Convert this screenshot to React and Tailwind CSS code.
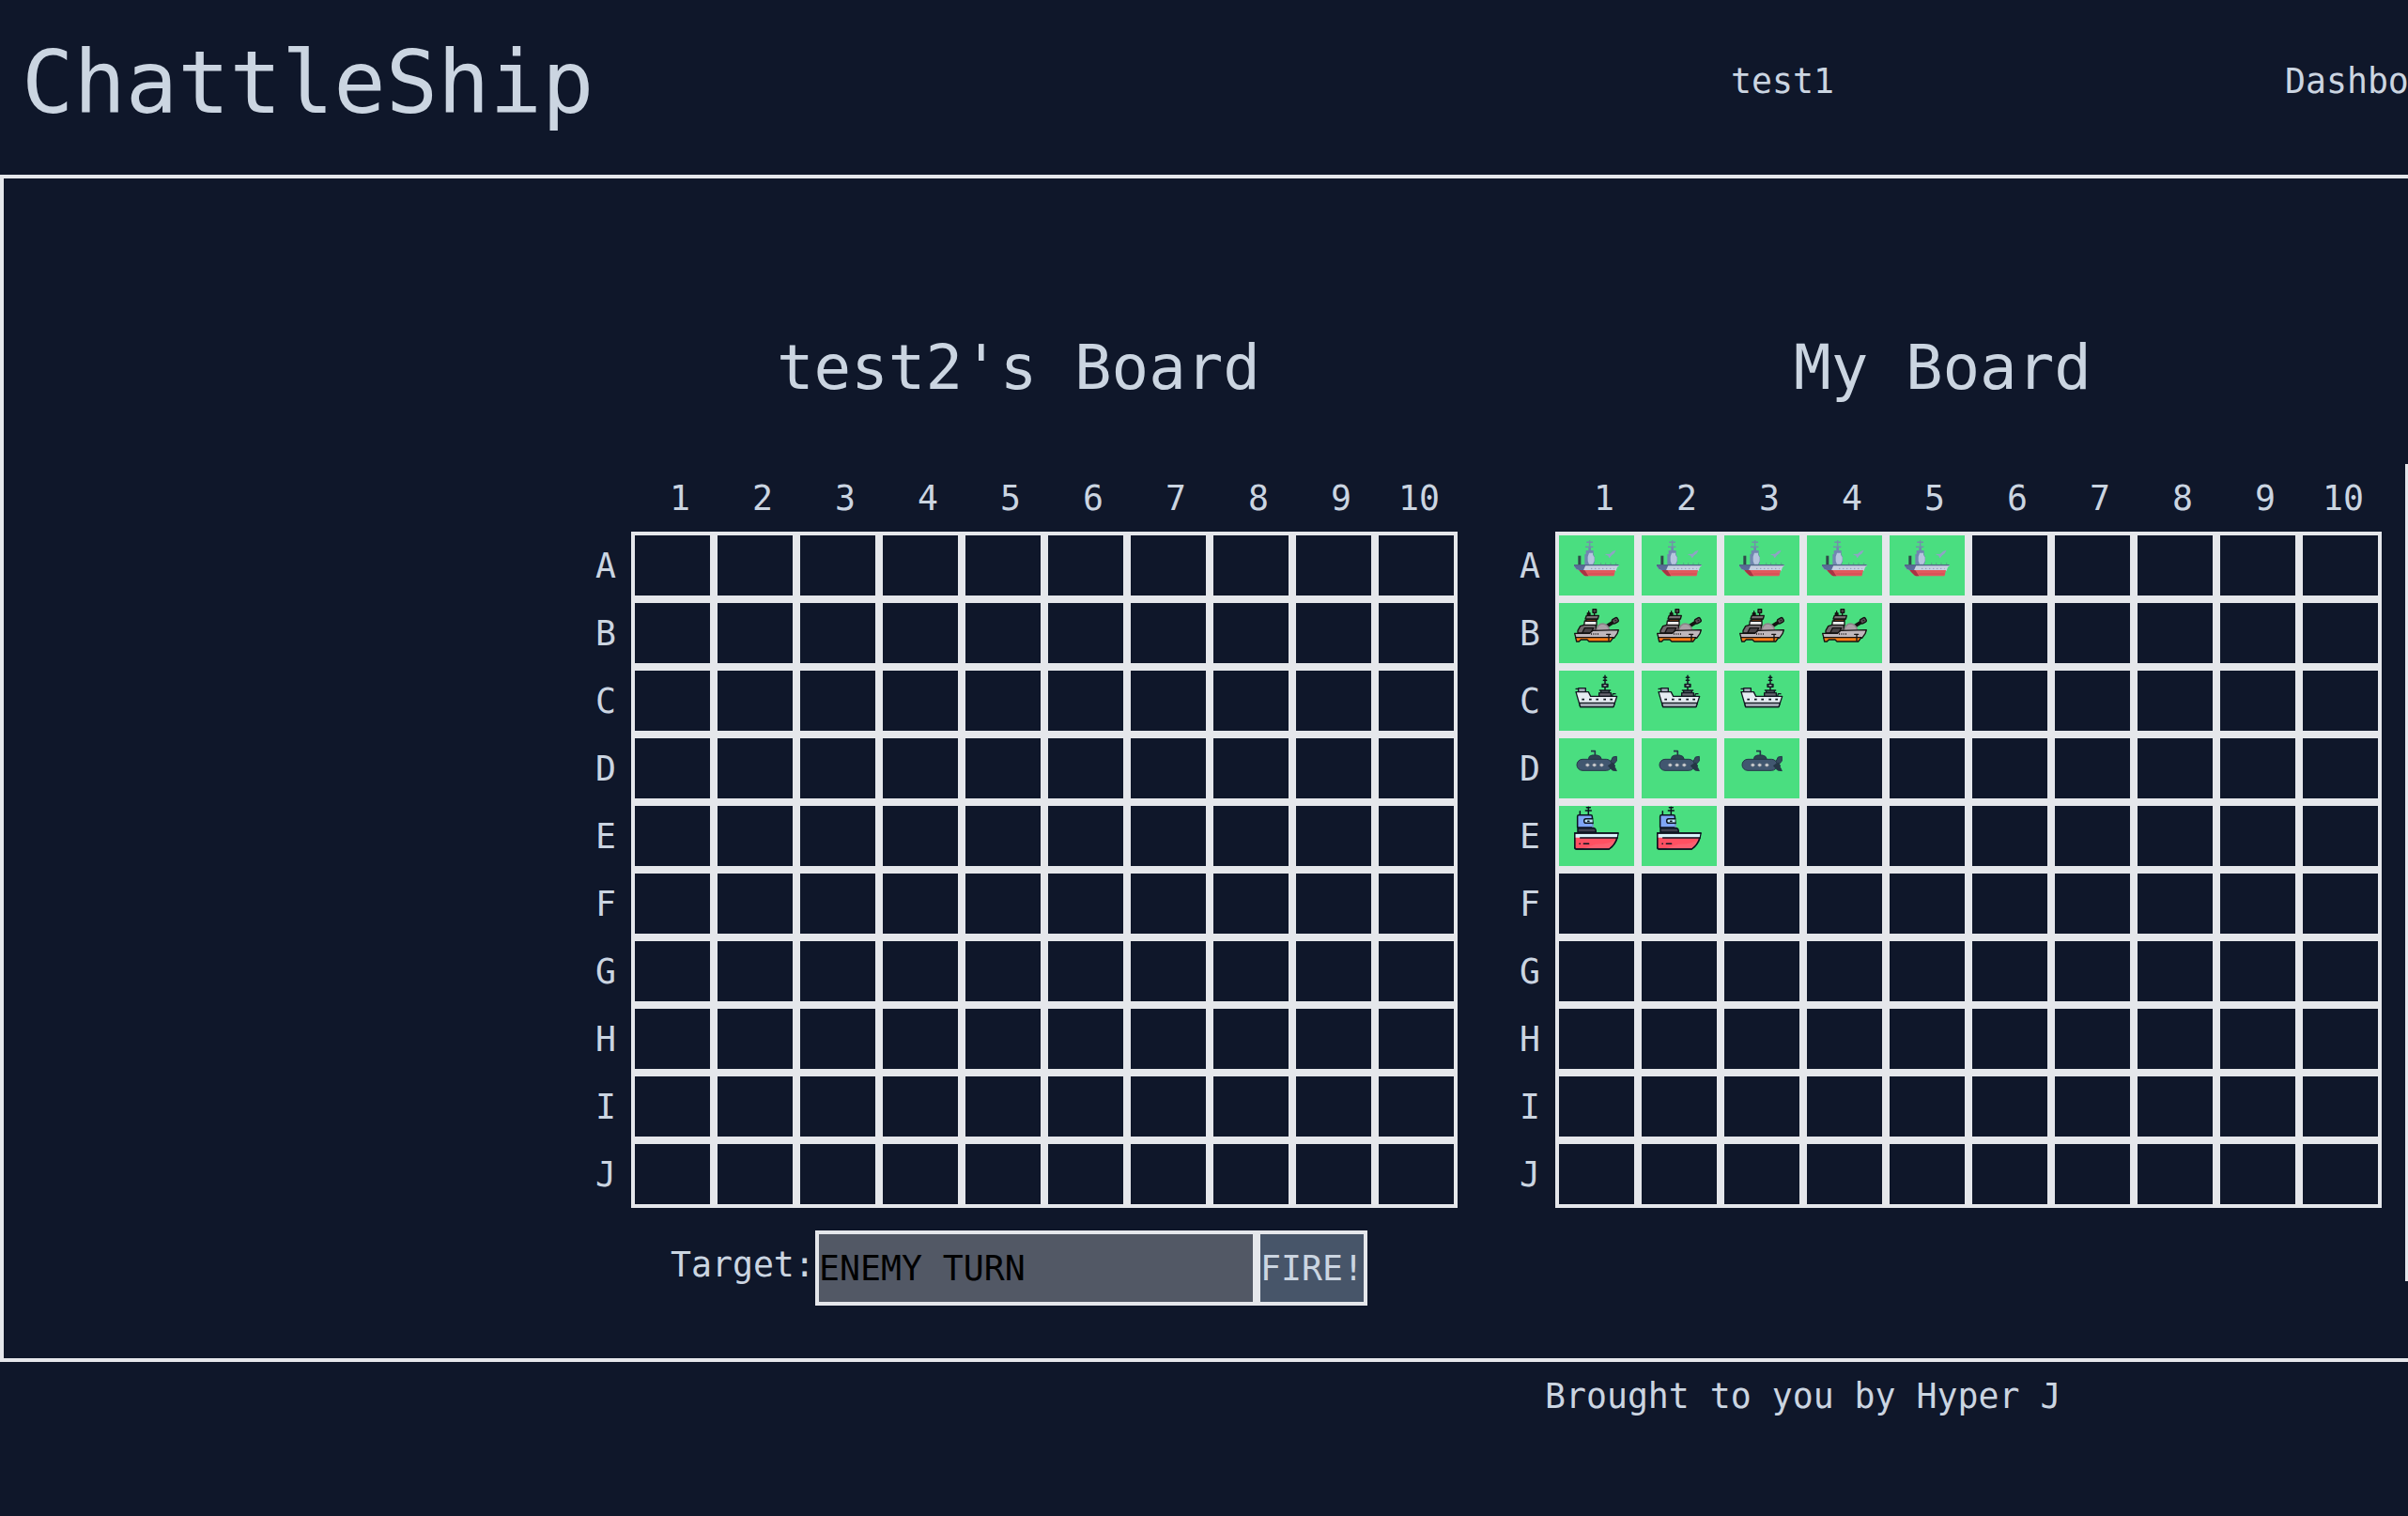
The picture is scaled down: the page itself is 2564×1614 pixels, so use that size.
import React from "react";

function Carrier() {
  return (
    <>
      <path d="M50 16V54M40 22H60M36 37H61" stroke="#6f93a8" strokeWidth="4.5" />
      <path d="M34 94V60H38V48H46V38H54V48H62V62L66 68V84L62 94Z" fill="#7187b0" />
      <path d="M48 56H60V62L65 70V82L60 92H48L44 82V68Z" fill="#b6c5de" />
      <rect x="13" y="65" width="9" height="29" fill="#2f4a4a" />
      <path d="M98 60L114 59L124 50L134 47L128 58L120 64L113 73L109 65Z" fill="#8fa3c4" />
      <path d="M86 92V88M101 92V88M117 92V88M134 92V88" stroke="#5d8f8c" strokeWidth="3" />
      <path d="M0 93H143V98L138 101L134 113H20L8 109L0 98Z" fill="#c6cfe0" />
      <path d="M0 93H38L30 112H18L8 109L0 98Z" fill="#5a6c98" />
      <path d="M0 95H143" stroke="#4f6684" strokeWidth="4" />
      <path d="M54 106H128" stroke="#7f8cab" strokeWidth="2.5" strokeDasharray="4 8" />
      <path d="M16 111H132L128 128Q127 130 124 130H36Q28 126 16 111Z" fill="#e2595d" />
      <path d="M16 111H34L46 130H36Q28 126 16 111Z" fill="#a83444" />
      <path d="M46 123H128" stroke="#c9474f" strokeWidth="2" />
    </>
  );
}

function Battleship() {
  return (
    <g stroke="#151313" strokeWidth="4" strokeLinejoin="round" strokeLinecap="round">
      <path d="M47 38V26M43 38V32H51V38" strokeWidth="4" />
      <path d="M65 40V30" />
      <rect x="60" y="20" width="11" height="11" fill="#514b4e" />
      <path d="M106 73L130 58" strokeWidth="12" />
      <rect x="122" y="49" width="19" height="15" rx="5" fill="#5b5659" transform="rotate(-30 131 56)" />
      <circle cx="132" cy="56" r="2" fill="#888888" strokeWidth="2" />
      <path d="M34 57H72V72H32Z" fill="#eeeeee" />
      <path d="M40 51H74L70 58H38Z" fill="#7a3d16" />
      <path d="M40 40H79L76 51H36Z" fill="#777073" />
      <path d="M32 70H70V96H12V88L20 74Z" fill="#716a6e" />
      <path d="M70 92Q74 66 92 66Q110 68 114 90Z" fill="#a9a1a6" stroke="#8b8488" />
      <path d="M34 80H62L54 96H26Z" fill="#494447" />
      <path d="M2 97H50L60 88L142 86L138 98L128 112H6Z" fill="#bfb7bc" />
      <path d="M5 110H126L116 123H48L42 117H22L16 123H8Z" fill="#f77d16" />
      <path d="M54 99H78" strokeDasharray="3 4" strokeLinecap="butt" strokeWidth="5" />
      <path d="M104 100H116M111 101V121" />
    </g>
  );
}

function Cruiser() {
  return (
    <g stroke="#101820" strokeWidth="4" strokeLinejoin="round" strokeLinecap="round">
      <path d="M99 16V62M94 22H104M94 31H104" strokeWidth="4.5" />
      <rect x="90" y="43" width="18" height="9" fill="#27333a" />
      <path d="M96 47.500H102" stroke="#dfe5e8" strokeWidth="3" />
      <path d="M82 63H116M86 63V70H112V63" fill="#59656d" />
      <path d="M80 71H118V82H80Z" fill="#65666f" />
      <path d="M122 82L124 74H132" fill="none" />
      <path d="M6 58H14M14 56H37V68H14Z" fill="#a3a9ba" />
      <path d="M6 68H46L53 82H137L126 116H20Z" fill="#e5ecf2" />
      <path d="M17 103H130L126 116H20Z" fill="#a0a6b2" />
      <path d="M25 92H33M48 92H56M70 92H78M94 92H102M115 92H123" strokeWidth="5" strokeLinecap="butt" />
    </g>
  );
}

function Submarine() {
  return (
    <g stroke="#243848" strokeWidth="3" strokeLinejoin="round">
      <path d="M54 41H67V54" fill="none" strokeWidth="5" />
      <path d="M46 68Q46 55 58 54H74Q87 56 88 68Z" fill="#2f4353" />
      <path d="M106 76L118 72L124 60L136 58V72L128 82L118 86Z" fill="#344a5d" />
      <rect x="9" y="67" width="112" height="36" rx="18" fill="#415770" />
      <path d="M109 88L124 78L130 86V92L136 104L122 102Z" fill="#253746" />
      <g fill="#d5d5d8" stroke="#6d7884" strokeWidth="2">
        <ellipse cx="43" cy="85.500" rx="6" ry="5" />
        <ellipse cx="65" cy="85.500" rx="6" ry="5" />
        <ellipse cx="88" cy="85.500" rx="6" ry="5" />
      </g>
    </g>
  );
}

function Destroyer() {
  return (
    <g stroke="#0b1320" strokeWidth="4.5" strokeLinejoin="round" strokeLinecap="round">
      <path d="M46 4V28M40 5H52M37 15H55M19 17V28" fill="none" />
      <path d="M15 29H54Q58 29 58 34L60 56V69H11V34Q11 29 15 29Z" fill="#7fa5f5" />
      <path d="M60 59V67" stroke="#8dc4ef" />
      <path d="M59 41H38Q32 41 32 48Q32 55 38 55H59" fill="#bfe6fb" />
      <path d="M44 49H48" />
      <path d="M12 71H64Q70 72 70 84H12Z" fill="#3d4050" />
      <path d="M2 87H141L138 102Q130 126 112 138H8Q2 138 2 132Z" fill="#ff5062" />
      <path d="M4 89H139L137 101H4Z" fill="#d9f3fb" stroke="none" />
      <path d="M136 104Q120 122 70 122L30 136H112Q130 124 136 104Z" fill="#fb5f70" stroke="none" />
      <path d="M2 87H141M20 102H137M18 121H19M31 121H47M2 87V132Q2 138 8 138H112Q130 126 138 102" fill="none" />
    </g>
  );
}

const fleet = {
  A: { Ship: Carrier, size: 5 },
  B: { Ship: Battleship, size: 4 },
  C: { Ship: Cruiser, size: 3 },
  D: { Ship: Submarine, size: 3 },
  E: { Ship: Destroyer, size: 2 },
};

const rows = ["A", "B", "C", "D", "E", "F", "G", "H", "I", "J"];
const cols = [1, 2, 3, 4, 5, 6, 7, 8, 9, 10];

function Cell({ Ship }) {
  return (
    <div
      className={
        Ship
          ? "flex h-[72px] w-[88px] items-start justify-center border-4 border-[#e5e7eb] bg-[#4ade80]"
          : "h-[72px] w-[88px] border-4 border-[#e5e7eb]"
      }
    >
      {Ship && (
        <svg viewBox="0 0 144 144" className="size-12" fill="none">
          <Ship />
        </svg>
      )}
    </div>
  );
}

function Board({ title, ships }) {
  return (
    <section className="flex w-[932px] flex-col">
      <h2 className="pt-1 pr-[3px] text-center text-[65.8px] leading-[88px]">{title}</h2>
      <div className="mt-[58px] flex h-[72px] pl-[52px]">
        {cols.map((n) => (
          <div
            key={n}
            className={n === 10 ? "w-[88px] pl-[25px] leading-[74px]" : "w-[88px] pl-[41px] leading-[74px]"}
          >
            {n}
          </div>
        ))}
      </div>
      {rows.map((r) => (
        <div key={r} className="flex h-[72px]">
          <div className="w-[52px] pl-[14px] leading-[74px]">{r}</div>
          {cols.map((n) => (
            <Cell key={n} Ship={ships && ships[r] && n <= ships[r].size ? ships[r].Ship : null} />
          ))}
        </div>
      ))}
    </section>
  );
}

export default function App() {
  return (
    <div className="flex h-[1614px] w-[2564px] flex-col overflow-hidden bg-[#0f172a] font-['DejaVu_Sans_Mono',monospace] text-[36.5px] whitespace-nowrap text-[#cbd5e1]">
      <header className="flex h-[186px] shrink-0 pl-[23px]">
        <h1 className="w-[1820px] shrink-0 pt-[33px] text-[92px] leading-[112px]">ChattleShip</h1>
        <nav className="flex pt-[59px] leading-[56px]">
          <span className="w-[590px] shrink-0">test1</span>
          <span>Dashboard</span>
        </nav>
      </header>
      <main className="flex h-[1264px] shrink-0 border-y-4 border-l-4 border-[#e5e7eb] pl-[616px]">
        <div className="shrink-0 pt-[154px]">
          <div className="flex gap-[52px]">
            <Board title="test2's Board" />
            <Board title="My Board" ships={fleet} />
          </div>
          <form className="mt-6 ml-[94px] flex h-20">
            <label className="w-[154px] leading-[73px]">Target:</label>
            <div className="w-[470px] border-4 border-[#e5e7eb] bg-[#525865] leading-[74px] text-black">
              ENEMY TURN
            </div>
            <button
              type="button"
              className="flex w-[118px] items-start border-4 border-[#e5e7eb] bg-[#475569] text-left leading-[74px]"
            >
              FIRE!
            </button>
          </form>
        </div>
        <aside className="mt-[304px] ml-[25px] h-[870px] w-[3px] shrink-0 bg-[#e5e7eb]" />
      </main>
      <footer className="pt-[9px] pl-[1645px] leading-[56px]">Brought to you by Hyper J</footer>
    </div>
  );
}
